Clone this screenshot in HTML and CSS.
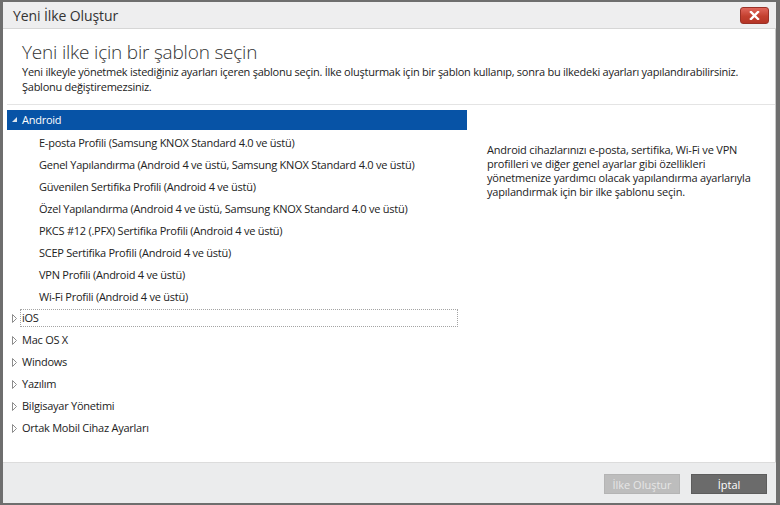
FILE: index.html
```html
<!DOCTYPE html>
<html lang="tr">
<head>
    <meta charset="UTF-8">
    <title>Yeni İlke Oluştur</title>
    <link rel="stylesheet" href="styles.css">
</head>
<body>
<div id="dialog">
    <div class="titlebar">
        <span class="title">Yeni İlke Oluştur</span>
        <button class="close" type="button">
            <svg width="11" height="9" viewBox="0 0 11 9"><path d="M2 1 L9 8 M9 1 L2 8" stroke="#fff" stroke-width="2.4" stroke-linecap="square"/></svg>
        </button>
    </div>
    <div class="content">
        <div class="intro">
            <h1>Yeni ilke için bir şablon seçin</h1>
            <p>Yeni ilkeyle yönetmek istediğiniz ayarları içeren şablonu seçin. İlke oluşturmak için bir şablon kullanıp, sonra bu ilkedeki ayarları yapılandırabilirsiniz. Şablonu değiştiremezsiniz.</p>
        </div>
        <div class="body">
            <ul class="tree">
                <li>
                    <div class="node selected">
                        <svg class="arrow" width="8" height="6" viewBox="0 0 8 6"><path d="M5 0 L5 5 L0 5 Z" fill="#dce4ee"/></svg>
                        <span class="label">Android</span>
                    </div>
                    <ul class="children">
                        <li class="node">E-posta Profili (Samsung KNOX Standard 4.0 ve üstü)</li>
                        <li class="node">Genel Yapılandırma (Android 4 ve üstü, Samsung KNOX Standard 4.0 ve üstü)</li>
                        <li class="node">Güvenilen Sertifika Profili (Android 4 ve üstü)</li>
                        <li class="node">Özel Yapılandırma (Android 4 ve üstü, Samsung KNOX Standard 4.0 ve üstü)</li>
                        <li class="node">PKCS #12 (.PFX) Sertifika Profili (Android 4 ve üstü)</li>
                        <li class="node">SCEP Sertifika Profili (Android 4 ve üstü)</li>
                        <li class="node">VPN Profili (Android 4 ve üstü)</li>
                        <li class="node">Wi-Fi Profili (Android 4 ve üstü)</li>
                    </ul>
                </li>
                <li><div class="node"><svg class="arrow" width="8" height="9" viewBox="0 0 8 9"><path d="M0.5 0.5 L4.5 4.5 L0.5 8.5 Z" fill="#fff" stroke="#8c8c8c"/></svg><span class="label focused">iOS</span></div></li>
                <li><div class="node"><svg class="arrow" width="8" height="9" viewBox="0 0 8 9"><path d="M0.5 0.5 L4.5 4.5 L0.5 8.5 Z" fill="#fff" stroke="#8c8c8c"/></svg><span class="label">Mac OS X</span></div></li>
                <li><div class="node"><svg class="arrow" width="8" height="9" viewBox="0 0 8 9"><path d="M0.5 0.5 L4.5 4.5 L0.5 8.5 Z" fill="#fff" stroke="#8c8c8c"/></svg><span class="label">Windows</span></div></li>
                <li><div class="node"><svg class="arrow" width="8" height="9" viewBox="0 0 8 9"><path d="M0.5 0.5 L4.5 4.5 L0.5 8.5 Z" fill="#fff" stroke="#8c8c8c"/></svg><span class="label">Yazılım</span></div></li>
                <li><div class="node"><svg class="arrow" width="8" height="9" viewBox="0 0 8 9"><path d="M0.5 0.5 L4.5 4.5 L0.5 8.5 Z" fill="#fff" stroke="#8c8c8c"/></svg><span class="label">Bilgisayar Yönetimi</span></div></li>
                <li><div class="node"><svg class="arrow" width="8" height="9" viewBox="0 0 8 9"><path d="M0.5 0.5 L4.5 4.5 L0.5 8.5 Z" fill="#fff" stroke="#8c8c8c"/></svg><span class="label">Ortak Mobil Cihaz Ayarları</span></div></li>
            </ul>
            <div class="details">
                <p>Android cihazlarınızı e-posta, sertifika, Wi-Fi ve VPN profilleri ve diğer genel ayarlar gibi özellikleri yönetmenize yardımcı olacak yapılandırma ayarlarıyla yapılandırmak için bir ilke şablonu seçin.</p>
            </div>
        </div>
    </div>
    <div class="footer">
        <button class="btn" type="button" disabled>İlke Oluştur</button>
        <button class="btn primary" type="button">İptal</button>
    </div>
</div>
</body>
</html>
```

FILE: styles.css
```css
html * {
    box-sizing: border-box;
}

body {
    margin: 0;
    background: #6e6e6e;
    font-family: "Open Sans", "Noto Sans", sans-serif;
    color: #222;
}

#dialog {
    display: flex;
    flex-direction: column;
    height: 505px;
    margin: 0 4px 0 3px;
    padding: 2px 0;
}

.titlebar {
    display: flex;
    align-items: center;
    justify-content: space-between;
    height: 27px;
    padding: 0 7px 0 10px;
    background: #eeeeef;
    border-bottom: 1px solid #d6d6d6;
}

.title {
    font-size: 14px;
    letter-spacing: -0.1px;
    color: #333;
}

.close {
    display: flex;
    align-items: center;
    justify-content: center;
    width: 29px;
    height: 17px;
    margin-top: 1px;
    padding: 0;
    border: 1px solid #9a3127;
    border-radius: 3px;
    background: linear-gradient(#e0675c, #c3402f 55%, #b53526);
}

.content {
    flex: 1;
    display: flex;
    flex-direction: column;
    background: #fff;
    border-right: 1px solid #c9c9c9;
}

.intro {
    margin: 0 0 0 4px;
    padding: 10px 15px 10px;
    border-bottom: 1px solid #e4e4e4;
}

.intro h1 {
    margin: 0;
    font-size: 19px;
    font-weight: 300;
    letter-spacing: -0.2px;
    line-height: 26px;
    color: #333;
}

.intro p {
    margin: -1px 0 0;
    font-size: 11px;
    letter-spacing: -0.25px;
    line-height: 15px;
}

.body {
    flex: 1;
    display: flex;
    padding: 5px 0 0 4px;
}

.tree, .children {
    list-style: none;
    margin: 0;
    padding: 0;
}

.tree {
    width: 460px;
    font-size: 11px;
    letter-spacing: -0.25px;
}

.node {
    display: flex;
    align-items: center;
    height: 20px;
    margin-bottom: 2px;
    padding-left: 5px;
}

.children .node {
    padding-left: 32px;
}

.node.selected {
    background: #0753a6;
    color: #fff;
}

.arrow {
    flex: none;
}

.label {
    padding: 0 1px;
    line-height: 16px;
    border: 1px solid transparent;
}

.label.focused {
    flex: 1;
    margin-right: 9px;
    border: 1px dotted #a4a4a4;
}

.details {
    flex: 1;
    padding: 33px 12px 0 20px;
    font-size: 11px;
    letter-spacing: -0.2px;
    line-height: 14px;
}

.details p {
    margin: 0;
}

.footer {
    display: flex;
    justify-content: flex-end;
    gap: 11px;
    height: 41px;
    padding: 11px 9px 0 0;
    background: #ebeced;
    border-top: 1px solid #dcdcdc;
}

.btn {
    width: 76px;
    height: 20px;
    padding: 0;
    border: 1px solid #5d5d5d;
    background: #6b6b6b;
    color: #fff;
    font-family: inherit;
    font-size: 11px;
}

.btn:disabled {
    border-color: #b4b4b4;
    background: #bdbdbd;
    color: #e6e6e6;
}
```
